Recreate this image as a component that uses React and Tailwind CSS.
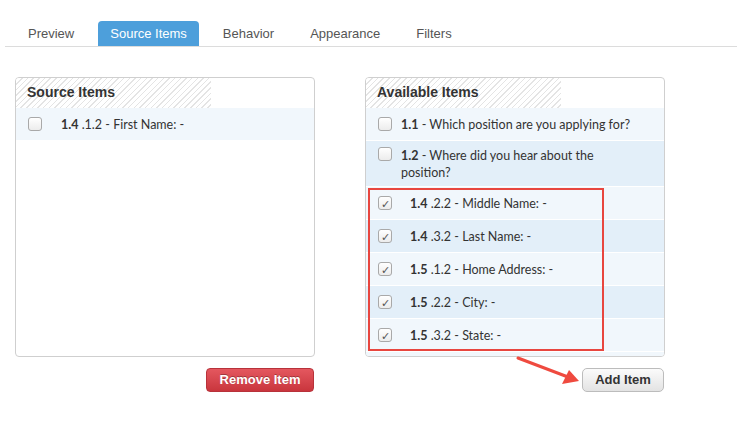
import React from "react";

const tabs = ["Preview", "Source Items", "Behavior", "Appearance", "Filters"];

const Checkbox = ({ checked }) => (
  <span className="flex h-[14px] w-[14px] shrink-0 items-center justify-center rounded-[3px] border border-[#a9a9a9] bg-gradient-to-b from-white to-[#ececec] text-[11px] leading-none text-[#555]">
    {checked ? "✓" : ""}
  </span>
);

const Row = ({ num, rest, sub, checked, dark, tall, indent }) => (
  <div
    className={`flex border-b border-white px-[12px] ${
      dark ? "bg-[#e3eff9]" : "bg-[#f1f7fc]"
    } ${tall ? "items-start pb-[5px] pt-[6px]" : "h-[33px] items-center"}`}
  >
    <Checkbox checked={checked} />
    <div className={`${indent} w-[238px] text-[12.5px] leading-[17px] text-[#333]`}>
      <span className="font-bold">{num}</span>
      {sub ? <span> {sub}</span> : null}
      <span> - {rest}</span>
    </div>
  </div>
);

const Panel = ({ title, children }) => (
  <div className="relative h-[280px] w-[300px] overflow-hidden rounded-[4px] border border-[#cfcfcf] bg-white">
    <div className="flex h-[30px] items-center">
      <div className="flex h-full w-[195px] items-center bg-[repeating-linear-gradient(135deg,#e4e4e4_0px,#e4e4e4_1px,#ffffff_1px,#ffffff_4px)] pb-[2px] pl-[11px] font-['Liberation_Sans',Arial,sans-serif] text-[14px] font-bold text-[#333]">
        {title}
      </div>
    </div>
    {children}
  </div>
);

export default function App() {
  return (
    <div
      className="relative h-[433px] w-[737px] overflow-hidden bg-white"
      style={{ fontFamily: "Lato, 'Open Sans', sans-serif" }}
    >
      {/* tab bar */}
      <div className="ml-[5px] mt-[21px] flex h-[26px] border-b border-[#dcdcdc] pl-[11px] font-['Liberation_Sans',Arial,sans-serif] text-[13px]">
        <div className="flex gap-[12px]">
          {tabs.map((t) => (
            <div
              key={t}
              className={`flex h-[25px] items-center px-[12px] ${
                t === "Source Items"
                  ? "rounded-t-[4px] bg-[#4d9fdb] text-white"
                  : "text-[#555]"
              }`}
            >
              {t}
            </div>
          ))}
        </div>
      </div>

      {/* panels */}
      <div className="ml-[15px] mt-[30px] flex gap-[50px]">
        <div className="flex flex-col items-end">
          <Panel title="Source Items">
            <Row num="1.4" sub=".1.2" rest="First Name: -" indent="ml-[19px]" />
          </Panel>
          <button className="mr-[1px] mt-[11px] h-[24px] w-[108px] rounded-[4px] border border-[#b8323a] bg-gradient-to-b from-[#e4575f] to-[#c9353d] font-['Liberation_Sans',Arial,sans-serif] text-[13px] font-bold text-white [text-shadow:0_-1px_0_rgba(0,0,0,0.3)]">
            Remove Item
          </button>
        </div>

        <div className="flex flex-col items-end">
          <Panel title="Available Items">
            <Row num="1.1" rest="Which position are you applying for?" indent="ml-[9px]" />
            <Row
              num="1.2"
              rest="Where did you hear about the position?"
              dark
              tall
              indent="ml-[9px]"
            />
            <Row num="1.4" sub=".2.2" rest="Middle Name: -" checked indent="ml-[18px]" />
            <Row num="1.4" sub=".3.2" rest="Last Name: -" checked dark indent="ml-[18px]" />
            <Row num="1.5" sub=".1.2" rest="Home Address: -" checked indent="ml-[18px]" />
            <Row num="1.5" sub=".2.2" rest="City: -" checked dark indent="ml-[18px]" />
            <Row num="1.5" sub=".3.2" rest="State: -" checked indent="ml-[18px]" />
            <div className="h-[10px] bg-[#f1f7fc]" />
            {/* highlight box */}
            <div className="absolute left-[2px] top-[110px] h-[163px] w-[236px] border-2 border-[#e8463f]" />
          </Panel>
          <button className="mr-[1px] mt-[11px] h-[24px] w-[82px] rounded-[5px] border border-[#bcbcbc] bg-gradient-to-b from-[#fbfbfb] to-[#e3e3e3] font-['Liberation_Sans',Arial,sans-serif] text-[13px] font-bold text-[#333]">
            Add Item
          </button>
        </div>
      </div>

      {/* arrow */}
      <svg className="absolute left-0 top-0" width="737" height="433" viewBox="0 0 737 433">
        <line x1="518" y1="358" x2="568" y2="377" stroke="#ef4a3f" strokeWidth="3" strokeLinecap="round" />
        <polygon points="579,381 562,384 569,370" fill="#ef4a3f" />
      </svg>
    </div>
  );
}
